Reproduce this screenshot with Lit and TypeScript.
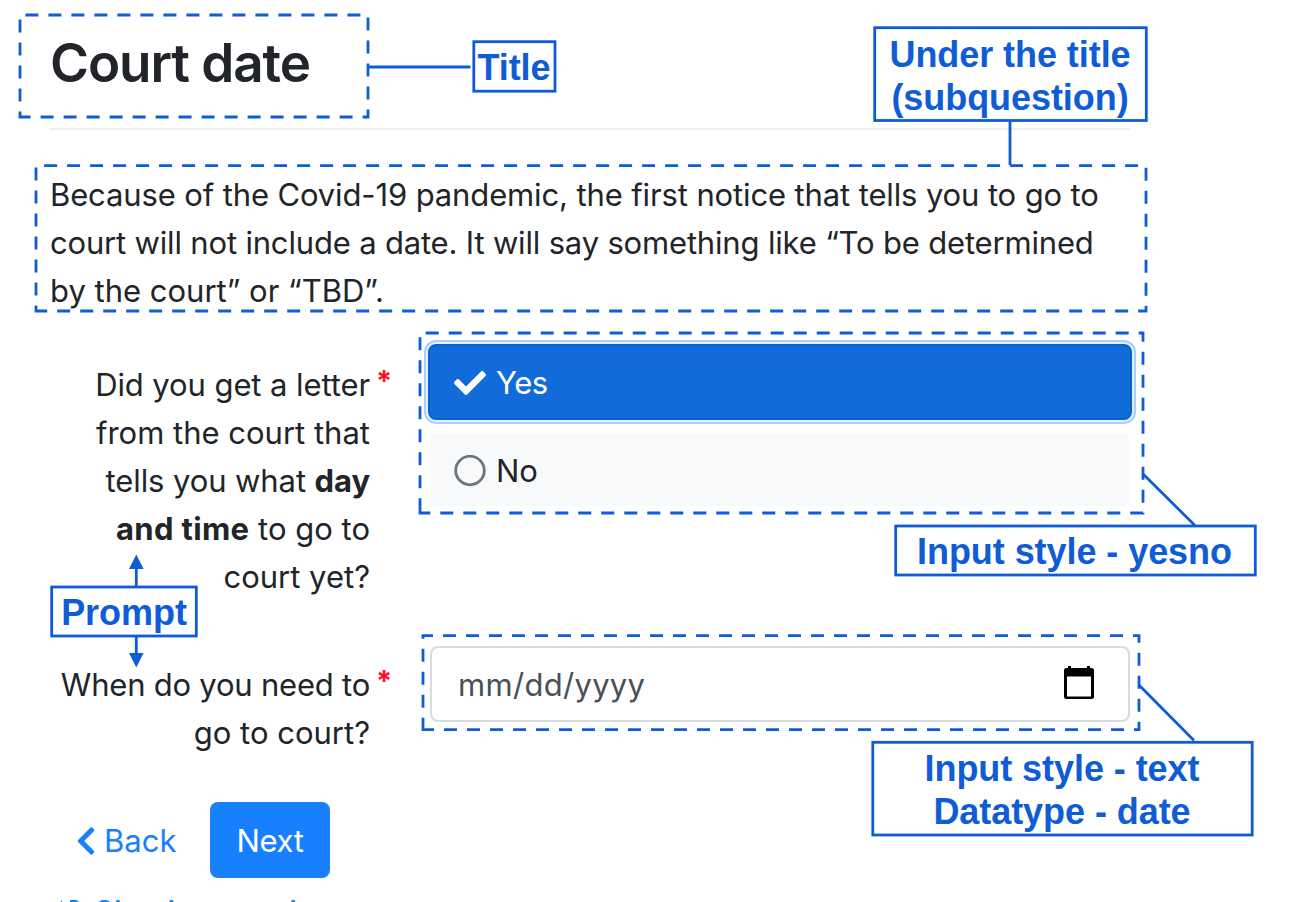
import { LitElement, html, css, svg } from "lit";
import { customElement } from "lit/decorators.js";

@customElement("question-form")
class QuestionForm extends LitElement {
  static styles = css`
    :host { display: block; box-sizing: border-box; padding: 28px 184px 0 50px; color: #212529;
      font: 400 31px/48px Inter, "Open Sans", sans-serif; }
    .title { margin: 0; height: 101.5px; box-sizing: border-box; border-bottom: 2px solid #efefef;
      font-size: 53px; font-weight: 600; line-height: 70px; white-space: nowrap; letter-spacing: -1.1px; }
    .line { display: block; white-space: nowrap; }
    .l1 { letter-spacing: -0.125px; }
    .l2 { letter-spacing: -0.175px; }
    .p1, .p3 { letter-spacing: -0.09px; }
    .p4 b { letter-spacing: 0.35px; }
    .w1 { letter-spacing: -0.22px; }
    .intro { margin: 41.5px 0 0; padding-bottom: 28px; }
    .row { display: grid; grid-template-columns: 320px 700px; column-gap: 60px; }
    .prompt { position: relative; text-align: right; padding-top: 18px; }
    .star { position: absolute; left: 326px; top: 14px; color: #ff0f1e; font-weight: 700; font-size: 29px; line-height: 48px; }
    .choices { display: flex; flex-direction: column; }
    .yes, .no { display: flex; align-items: center; border-radius: 8px; box-sizing: border-box; }
    .yes { height: 76px; margin: 1px -2px 14px -2px; padding: 1px 0 0 24px; background: #116bd8; color: #fff;
      border: 2px solid #0e62ca; box-shadow: 0 0 0 2px #e3f0ff, 0 0 0 4px #aad2ff; letter-spacing: -0.5px; }
    .no { height: 72px; padding: 1px 0 0 24px; background: #f8f9fa; }
    .mark { width: 32px; height: 32px; margin-right: 10px; flex: none; }
    .second { margin-top: 42px; }
    .date { display: flex; align-items: center; justify-content: space-between; height: 76px; margin-top: 3px;
      box-sizing: border-box; border: 2px solid #d7dce0; border-radius: 8px; padding: 2px 33px 0 26px; color: #495057; letter-spacing: 0.3px; }
    .calendar { width: 32px; height: 36px; margin-top: -4px; }
    .actions { display: flex; align-items: center; margin-top: 45px; height: 76px; color: #187fff; }
    .back { display: flex; align-items: center; width: 160px; box-sizing: border-box; padding: 1px 0 0 26px; }
    .chevron { width: 20px; height: 32px; margin-right: 8px; }
    .next { display: flex; align-items: center; justify-content: center; width: 120px; height: 76px; box-sizing: border-box;
      padding-top: 1px; background: #187fff; color: #fff; border-radius: 8px; letter-spacing: -0.3px; }
    .signin { display: flex; gap: 10px; margin-top: 10px; padding-left: 8px; color: #187fff; }
    .user { width: 26px; height: 28px; margin-top: 12px; }
  `;
  render() {
    return html`
      <h1 class="title">Court date</h1>
      <p class="intro">
        <span class="line l1">Because of the Covid-19 pandemic, the first notice that tells you to go to</span>
        <span class="line l2">court will not include a date. It will say something like “To be determined</span>
        <span class="line l3">by the court” or “TBD”.</span>
      </p>
      <div class="row">
        <div class="prompt">
          <span class="line p1">Did you get a letter</span><span class="line">from the court that</span>
          <span class="line p3">tells you what <b>day</b></span><span class="line p4"><b>and time</b> to go to</span>
          <span class="line">court yet?</span><span class="star">*</span>
        </div>
        <div class="choices">
          <div class="yes"><svg class="mark" viewBox="0 0 512 512"><path fill="#fff" d="M173.898 439.404l-166.4-166.4c-9.997-9.997-9.997-26.206 0-36.204l36.203-36.204c9.997-9.998 26.207-9.998 36.204 0L192 312.69 432.095 72.596c9.997-9.997 26.207-9.997 36.204 0l36.203 36.204c9.997 9.997 9.997 26.206 0 36.204l-294.4 294.401c-9.998 9.997-26.207 9.997-36.204-.001z"/></svg><span>Yes</span></div>
          <div class="no"><svg class="mark" viewBox="0 0 32 32"><circle cx="16" cy="15.5" r="14.3" fill="none" stroke="#6c757d" stroke-width="2.800"/></svg><span>No</span></div>
        </div>
      </div>
      <div class="row second">
        <div class="prompt"><span class="line w1">When do you need to</span><span class="line">go to court?</span><span class="star">*</span></div>
        <div><div class="date"><span>mm/dd/yyyy</span>
          <svg class="calendar" viewBox="0 0 32 36"><path d="M3.5 3H5V1h3v2h16V1h3v2h1.500a2.500 2.500 0 0 1 2.500 2.500v26a2.500 2.500 0 0 1-2.500 2.500h-25a2.500 2.500 0 0 1-2.500-2.500v-26a2.500 2.500 0 0 1 2.500-2.500zM4 11.500V31.500h24V11.500z" fill="#000" fill-rule="evenodd"/></svg>
        </div></div>
      </div>
      <div class="actions">
        <span class="back"><svg class="chevron" viewBox="0 0 320 512"><path fill="#187fff" d="M34.52 239.03L228.87 44.69c9.37-9.37 24.57-9.37 33.94 0l22.67 22.67c9.36 9.36 9.37 24.52.04 33.9L131.49 256l154.02 154.75c9.34 9.38 9.32 24.54-.04 33.9l-22.67 22.67c-9.37 9.37-24.57 9.37-33.94 0L34.52 272.97c-9.37-9.37-9.37-24.57 0-33.94z"/></svg>Back</span>
        <span class="next">Next</span>
      </div>
      <div class="signin"><svg class="user" viewBox="0 0 26 28"><path d="M1 4l3-4v12M12 12V0h5a5 5 0 0 1 0 10z" fill="#187fff"/></svg><span>Sign in or register</span></div>`;
  }
}

@customElement("callout-layer")
class CalloutLayer extends LitElement {
  static styles = css`
    :host { position: absolute; inset: 0; color: #0f5cd7; font: 700 36px/43px "Liberation Sans", Arial, sans-serif; letter-spacing: -0.06px; }
    .lines { position: absolute; inset: 0; width: 1314px; height: 902px; }
    .shape { fill: none; stroke: #0f5cd7; stroke-width: 2.8px; }
    .head { fill: #0f5cd7; }
    .note { position: absolute; text-align: center; white-space: nowrap; }
    .note-title { left: 473.5px; top: 46px; width: 81px; }
    .note-under { left: 874.5px; top: 33px; width: 271px; }
    .note-yesno { left: 895px; top: 530px; width: 359px; }
    .note-prompt { left: 51.5px; top: 591px; width: 145px; }
    .note-date { left: 872.5px; top: 747px; width: 379px; }
  `;
  render() {
    const areas = [
      [20, 15, 368, 117, 7.6], [36, 165.7, 1146, 311, 7.6],
      [420, 333, 1143, 513, -1.7], [423, 635.7, 1139, 729.7, 1],
    ];
    const boxes = [
      [473.8, 41.7, 81.2, 49.5], [874.7, 27.7, 271.6, 92.8], [895.7, 526, 359.6, 49],
      [51.7, 587, 144.6, 49], [872.8, 742.3, 379.4, 92.7],
    ];
    return html`
      <svg class="lines" viewBox="0 0 1314 902">
        ${areas.map(([l, t, r, b, o]) => svg`<path class="shape" d="M${l} ${b}V${t}H${r}V${b}H${l}v-2" stroke-dasharray="13 10" stroke-dashoffset="${o}"/>`)}
        ${boxes.map(([x, y, w, h]) => svg`<rect class="shape" x="${x}" y="${y}" width="${w}" height="${h}"/>`)}
        <path class="shape" d="M368 67H470.500M1010 121V165M1143 474L1195 525.500M1139 685L1194 740.500M136.300 587V566M136.300 637V656"/>
        <path class="head" d="M136.300 554.500L143.600 569H129zM136.300 667.500L143.600 653H129z"/>
      </svg>
      <div class="note note-title">Title</div>
      <div class="note note-under">Under the title<br>(subquestion)</div>
      <div class="note note-yesno">Input style - yesno</div>
      <div class="note note-prompt">Prompt</div>
      <div class="note note-date">Input style - text<br>Datatype - date</div>`;
  }
}

@customElement("app-root")
class AppRoot extends LitElement {
  static styles = css`
    :host { display: block; position: relative; width: 1314px; height: 902px; overflow: hidden; background: #fff; }
  `;
  render() {
    return html`<question-form></question-form><callout-layer></callout-layer>`;
  }
}
